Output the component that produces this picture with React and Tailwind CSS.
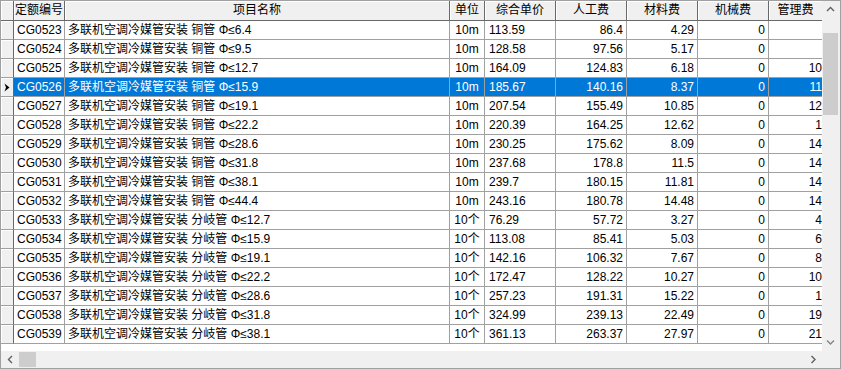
import React from "react";

const rows = [
  ["CG0523", "多联机空调冷媒管安装 铜管 Φ≤6.4", "10m", "113.59", "86.4", "4.29", "0", ""],
  ["CG0524", "多联机空调冷媒管安装 铜管 Φ≤9.5", "10m", "128.58", "97.56", "5.17", "0", ""],
  ["CG0525", "多联机空调冷媒管安装 铜管 Φ≤12.7", "10m", "164.09", "124.83", "6.18", "0", "10"],
  ["CG0526", "多联机空调冷媒管安装 铜管 Φ≤15.9", "10m", "185.67", "140.16", "8.37", "0", "11"],
  ["CG0527", "多联机空调冷媒管安装 铜管 Φ≤19.1", "10m", "207.54", "155.49", "10.85", "0", "12"],
  ["CG0528", "多联机空调冷媒管安装 铜管 Φ≤22.2", "10m", "220.39", "164.25", "12.62", "0", "1"],
  ["CG0529", "多联机空调冷媒管安装 铜管 Φ≤28.6", "10m", "230.25", "175.62", "8.09", "0", "14"],
  ["CG0530", "多联机空调冷媒管安装 铜管 Φ≤31.8", "10m", "237.68", "178.8", "11.5", "0", "14"],
  ["CG0531", "多联机空调冷媒管安装 铜管 Φ≤38.1", "10m", "239.7", "180.15", "11.81", "0", "14"],
  ["CG0532", "多联机空调冷媒管安装 铜管 Φ≤44.4", "10m", "243.16", "180.78", "14.48", "0", "14"],
  ["CG0533", "多联机空调冷媒管安装 分岐管 Φ≤12.7", "10个", "76.29", "57.72", "3.27", "0", "4"],
  ["CG0534", "多联机空调冷媒管安装 分岐管 Φ≤15.9", "10个", "113.08", "85.41", "5.03", "0", "6"],
  ["CG0535", "多联机空调冷媒管安装 分岐管 Φ≤19.1", "10个", "142.16", "106.32", "7.67", "0", "8"],
  ["CG0536", "多联机空调冷媒管安装 分岐管 Φ≤22.2", "10个", "172.47", "128.22", "10.27", "0", "10"],
  ["CG0537", "多联机空调冷媒管安装 分岐管 Φ≤28.6", "10个", "257.23", "191.31", "15.22", "0", "1"],
  ["CG0538", "多联机空调冷媒管安装 分岐管 Φ≤31.8", "10个", "324.99", "239.13", "22.49", "0", "19"],
  ["CG0539", "多联机空调冷媒管安装 分岐管 Φ≤38.1", "10个", "361.13", "263.37", "27.97", "0", "21"],
];

const headers = ["定额编号", "项目名称", "单位", "综合单价", "人工费", "材料费", "机械费", "管理费"];
const align = [
  "justify-start pl-[3px]",
  "justify-start pl-[3px]",
  "justify-center",
  "justify-start pl-[4px]",
  "justify-end pr-[3px]",
  "justify-end pr-[3px]",
  "justify-end pr-[3px]",
  "justify-end pr-[0px]",
];

const GRID = "grid grid-cols-[13px_51px_385px_35px_71px_71px_71px_71px_53px]";

function Arrow({ dir, color = "#606060" }) {
  const pts = {
    up: "1,5 4.5,1.5 8,5",
    down: "1,1.5 4.5,5 8,1.5",
    left: "5,1 1.5,4.5 5,8",
    right: "1.5,1 5,4.5 1.5,8",
  }[dir];
  const w = dir === "up" || dir === "down" ? 9 : 7;
  const h = dir === "up" || dir === "down" ? 7 : 9;
  return (
    <svg width={w} height={h} viewBox={`0 0 ${w} ${h}`}>
      <polyline points={pts} fill="none" stroke={color} strokeWidth="1.4" />
    </svg>
  );
}

export default function App() {
  return (
    <div className="w-[841px] h-[369px] bg-white border border-[#a0a0a0] flex flex-col overflow-hidden font-['Liberation_Sans','Noto_Sans_CJK_SC',sans-serif] text-[12px] text-black leading-[18px]">
      <div className="flex h-[350px]">
        <div className="w-[821px] h-[350px] overflow-hidden bg-white">
          {/* header */}
          <div className={`${GRID} h-[20px]`}>
            <div className="h-[20px] bg-[#f0f0f0] border-r border-b border-[#696969] shadow-[inset_1px_1px_0_#ffffff]" />
            {headers.map((h, i) => (
              <div
                key={i}
                className={`h-[20px] bg-[#f0f0f0] border-b border-[#696969] ${i < 7 ? "border-r" : ""} shadow-[inset_1px_1px_0_#ffffff] flex items-center justify-center whitespace-nowrap overflow-hidden leading-[19px]`}
              >
                {h}
              </div>
            ))}
          </div>
          {rows.map((r, ri) => {
            const sel = ri === 3;
            return (
              <div key={ri} className={`${GRID} h-[19px]`}>
                <div className="h-[19px] bg-[#f0f0f0] border-r border-r-[#696969] border-b border-b-[#a0a0a0] shadow-[inset_1px_1px_0_#ffffff] flex items-center pl-[3px]">
                  {sel && (
                    <svg width="6" height="9" viewBox="0 0 6 9">
                      <polygon points="0.5,0.5 5.5,4.5 0.5,8.5 2,4.5" fill="#000" />
                    </svg>
                  )}
                </div>
                {r.map((c, ci) => (
                  <div
                    key={ci}
                    className={`h-[19px] border-b border-[#a0a0a0] ${ci < 7 ? "border-r" : ""} flex items-center whitespace-nowrap overflow-hidden ${align[ci]} ${sel ? "bg-[#0078d7] text-white" : "bg-white"}`}
                  >
                    {c}
                  </div>
                ))}
              </div>
            );
          })}
        </div>
        {/* vertical scrollbar */}
        <div className="w-[18px] h-[350px] bg-[#f0f0f0] flex flex-col items-center">
          <div className="h-[17px] w-full flex items-center justify-center pr-[1px]">
            <Arrow dir="up" />
          </div>
          <div className="h-[15px]" />
          <div className="w-[15px] h-[82px] bg-[#cdcdcd] mr-[2px]" />
          <div className="flex-1" />
          <div className="h-[17px] w-full flex items-center justify-center pr-[1px]">
            <Arrow dir="down" color="#858585" />
          </div>
        </div>
      </div>
      {/* horizontal scrollbar */}
      <div className="flex h-[17px] bg-[#f0f0f0]">
        <div className="w-[821px] h-[17px] flex items-center">
          <div className="w-[18px] h-[17px] flex items-center justify-center">
            <Arrow dir="left" />
          </div>
          <div className="w-[17px] h-[15px] bg-[#cdcdcd]" />
          <div className="flex-1" />
          <div className="w-[17px] h-[17px] flex items-center justify-center">
            <Arrow dir="right" />
          </div>
        </div>
        <div className="w-[18px] h-[17px] bg-[#f0f0f0]" />
      </div>
    </div>
  );
}
